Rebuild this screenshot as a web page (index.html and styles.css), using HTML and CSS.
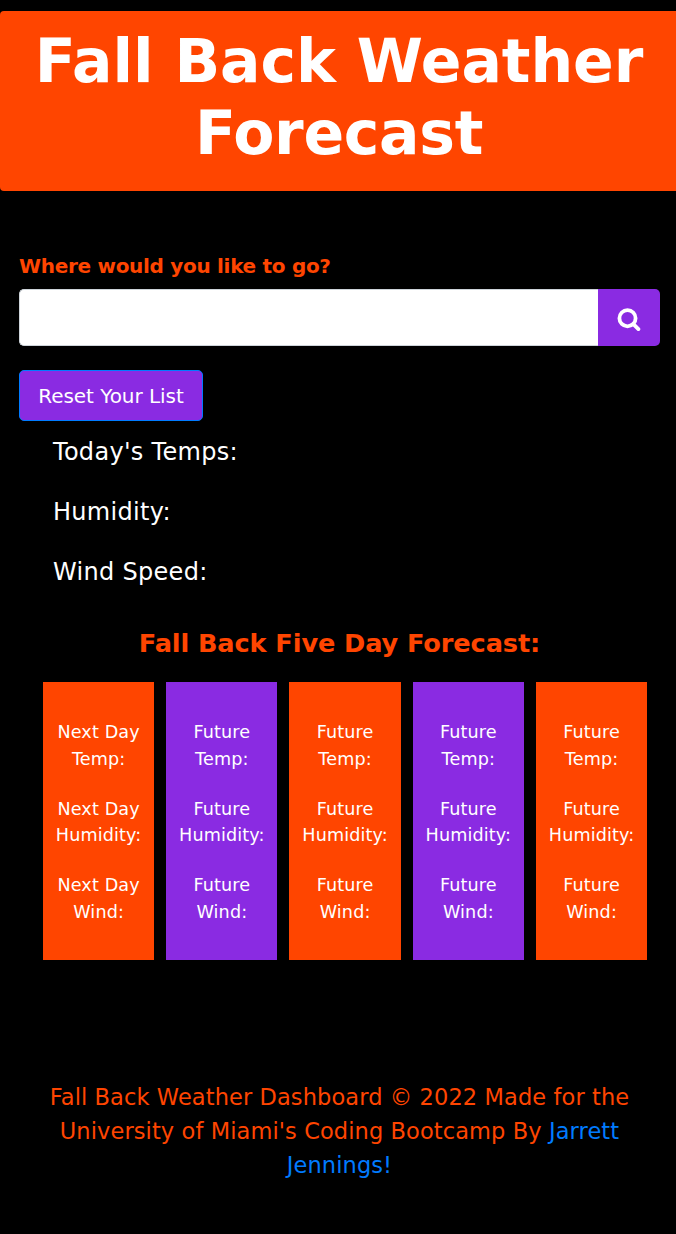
FILE: index.html
```html
<!DOCTYPE html>
<html lang="en">
<head>
<meta charset="utf-8">
<title>Fall Back Weather Forecast</title>
<link rel="stylesheet" href="styles.css">
</head>
<body>
<header class="banner"><h1>Fall Back Weather<br><span class="tight">Forecast</span></h1></header>
<main>
<section class="search">
<label class="prompt" for="city">Where would you like to go?</label>
<div class="search-row">
<input id="city" class="city" type="text">
<button class="go" aria-label="Search"><svg viewBox="0 0 24 26" width="24" height="26" fill="none" stroke="#fff"><circle cx="10.5" cy="12.2" r="8.1" stroke-width="3.8"/><path d="M16.4 18.1l5 5" stroke-width="3.8" stroke-linecap="round"/></svg></button>
</div>
<button class="reset">Reset Your List</button>
</section>
<section class="today"><p>Today's Temps:</p><p>Humidity:</p><p>Wind Speed:</p></section>
<h2>Fall Back Five Day Forecast:</h2>
<section class="days">
<div class="day"><p>Next Day<br>Temp:</p><p>Next Day<br>Humidity:</p><p>Next Day<br>Wind:</p></div>
<div class="day alt"><p>Future<br>Temp:</p><p>Future<br>Humidity:</p><p>Future<br>Wind:</p></div>
<div class="day"><p>Future<br>Temp:</p><p>Future<br>Humidity:</p><p>Future<br>Wind:</p></div>
<div class="day alt"><p>Future<br>Temp:</p><p>Future<br>Humidity:</p><p>Future<br>Wind:</p></div>
<div class="day"><p>Future<br>Temp:</p><p>Future<br>Humidity:</p><p>Future<br>Wind:</p></div>
</section>
</main>
<footer>Fall Back Weather Dashboard © 2022 Made for the<br>University of Miami's Coding Bootcamp By <a href="#">Jarrett<br>Jennings!</a></footer>
</body>
</html>
```
FILE: styles.css
```css
* { box-sizing: border-box; }
body { margin: 0; min-height: 1234px; padding-top: 11px; background: #000; color: #fff; font-family: Verdana, "DejaVu Sans", sans-serif; }
p, h1, h2 { margin: 0; }
.banner { height: 180px; padding: 14px 0 0 2px; background: #ff4500; border-radius: 4px 0 0 4px; text-align: center; }
h1 { font-size: 60px; line-height: 72px; letter-spacing: -0.05px; }
.tight { letter-spacing: -0.3px; }
.search { padding: 60px 16px 0 19px; }
.prompt { display: block; height: 38px; line-height: 30px; font-size: 20px; font-weight: 700; color: #ff4500; letter-spacing: -0.3px; }
.search-row { display: flex; height: 57px; }
.city { flex: 1; min-width: 0; background: #fff; border: 1px solid #ced4da; border-right: 0; border-radius: 5px 0 0 5px; }
.go { width: 62px; padding: 2px 0 0; border: 0; border-radius: 0 5px 5px 0; background: #8a2be2; display: flex; align-items: center; justify-content: center; }
.reset { display: block; width: 184px; height: 51px; margin-top: 24px; padding: 0; color: #fff; font: 20px/30px Verdana, "DejaVu Sans", sans-serif; letter-spacing: -0.05px; background: #8a2be2; border: 1px solid #007bff; border-radius: 5px; }
.today { padding: 13px 0 0 53px; font-size: 24px; line-height: 36px; letter-spacing: 0.3px; }
.today p { margin-bottom: 24px; }
h2 { padding: 11px 0 0 3px; text-align: center; font-size: 25.6px; line-height: 36px; color: #ff4500; letter-spacing: -0.1px; }
.days { display: grid; grid-template-columns: repeat(5, 1fr); gap: 12px; margin: 21px 28.8px 0 43px; height: 278px; }
.day { padding-top: 37.2px; background: #ff4500; text-align: center; font-size: 17.6px; line-height: 26.4px; letter-spacing: 0.13px; }
.day p { margin-bottom: 23.7px; }
.alt { background: #8a2be2; }
footer { padding: 120px 0 0 3px; text-align: center; font-size: 22.5px; line-height: 34px; color: #ff4500; letter-spacing: 0.1px; }
footer a { color: #007bff; text-decoration: none; }
```
